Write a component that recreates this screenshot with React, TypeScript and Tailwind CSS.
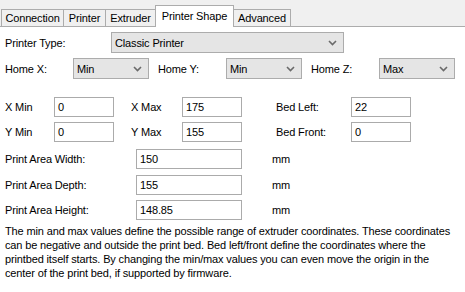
import React from "react";

const Chevron = () => (
  <svg width="9" height="6" viewBox="0 0 9 6" className="shrink-0">
    <polyline points="1,1 4.5,4.5 8,1" fill="none" stroke="#6a6a6a" strokeWidth="1.6" />
  </svg>
);

const Select = ({ value, w }: { value: string; w: string }) => (
  <div className={`${w} h-[21px] bg-[#e5e5e5] border border-[#acacac] flex items-center justify-between pl-[3px] pr-[6px]`}>
    <span>{value}</span>
    <Chevron />
  </div>
);

const Input = ({ value, w }: { value: string; w: string }) => (
  <div className={`${w} h-[20px] bg-white border border-[#ababab] flex items-center pl-[3px]`}>
    <span>{value}</span>
  </div>
);

export default function App() {
  const tabBase = "h-[17px] border-t border-l border-r border-[#acacac] bg-[#f0f0f0] -mr-px flex items-center justify-center";
  return (
    <div
      className="w-[465px] h-[292px] bg-white text-black text-[11px] leading-[14px] tracking-[-0.14px] overflow-hidden"
      style={{ fontFamily: '"Liberation Sans", Arial, sans-serif' }}
    >
      <div className="h-[27px] bg-[#f0f0f0] border-b border-[#acacac] flex items-end pl-px">
        <div className={`${tabBase} w-[63px]`}>Connection</div>
        <div className={`${tabBase} w-[43px]`}>Printer</div>
        <div className={`${tabBase} w-[51px]`}>Extruder</div>
        <div className="h-[22px] w-[79px] -mr-px -mb-px bg-white border-t border-l border-r border-[#acacac] flex items-start justify-center pt-[3px] relative z-10">
          Printer Shape
        </div>
        <div className={`${tabBase} w-[58px]`}>Advanced</div>
      </div>

      <div className="pl-[5px] flex flex-col">
        <div className="mt-[5px] flex items-center">
          <div className="w-[106px]">Printer Type:</div>
          <Select value="Classic Printer" w="w-[233px]" />
        </div>

        <div className="mt-[5px] flex items-center">
          <div className="w-[68px]">Home X:</div>
          <Select value="Min" w="w-[76px]" />
          <div className="w-[68px] ml-[9px]">Home Y:</div>
          <Select value="Min" w="w-[76px]" />
          <div className="w-[68px] ml-[9px]">Home Z:</div>
          <Select value="Max" w="w-[76px]" />
        </div>

        <div className="mt-[18px] flex items-center">
          <div className="w-[49px]">X Min</div>
          <Input value="0" w="w-[60px]" />
          <div className="w-[51px] ml-[17px]">X Max</div>
          <Input value="175" w="w-[60px]" />
          <div className="w-[75px] ml-[34px]">Bed Left:</div>
          <Input value="22" w="w-[60px]" />
        </div>

        <div className="mt-[5px] flex items-center">
          <div className="w-[49px]">Y Min</div>
          <Input value="0" w="w-[60px]" />
          <div className="w-[51px] ml-[17px]">Y Max</div>
          <Input value="155" w="w-[60px]" />
          <div className="w-[75px] ml-[34px]">Bed Front:</div>
          <Input value="0" w="w-[60px]" />
        </div>

        <div className="mt-[7px] flex items-center">
          <div className="w-[131px]">Print Area Width:</div>
          <Input value="150" w="w-[106px]" />
          <div className="ml-[30px]">mm</div>
        </div>
        <div className="mt-[6px] flex items-center">
          <div className="w-[131px]">Print Area Depth:</div>
          <Input value="155" w="w-[106px]" />
          <div className="ml-[30px]">mm</div>
        </div>
        <div className="mt-[5px] flex items-center">
          <div className="w-[131px]">Print Area Height:</div>
          <Input value="148.85" w="w-[106px]" />
          <div className="ml-[30px]">mm</div>
        </div>

        <div className="mt-[4px] whitespace-nowrap">
          <div>The min and max values define the possible range of extruder coordinates. These coordinates</div>
          <div>can be negative and outside the print bed. Bed left/front define the coordinates where the</div>
          <div>printbed itself starts. By changing the min/max values you can even move the origin in the</div>
          <div>center of the print bed, if supported by firmware.</div>
        </div>
      </div>
    </div>
  );
}
